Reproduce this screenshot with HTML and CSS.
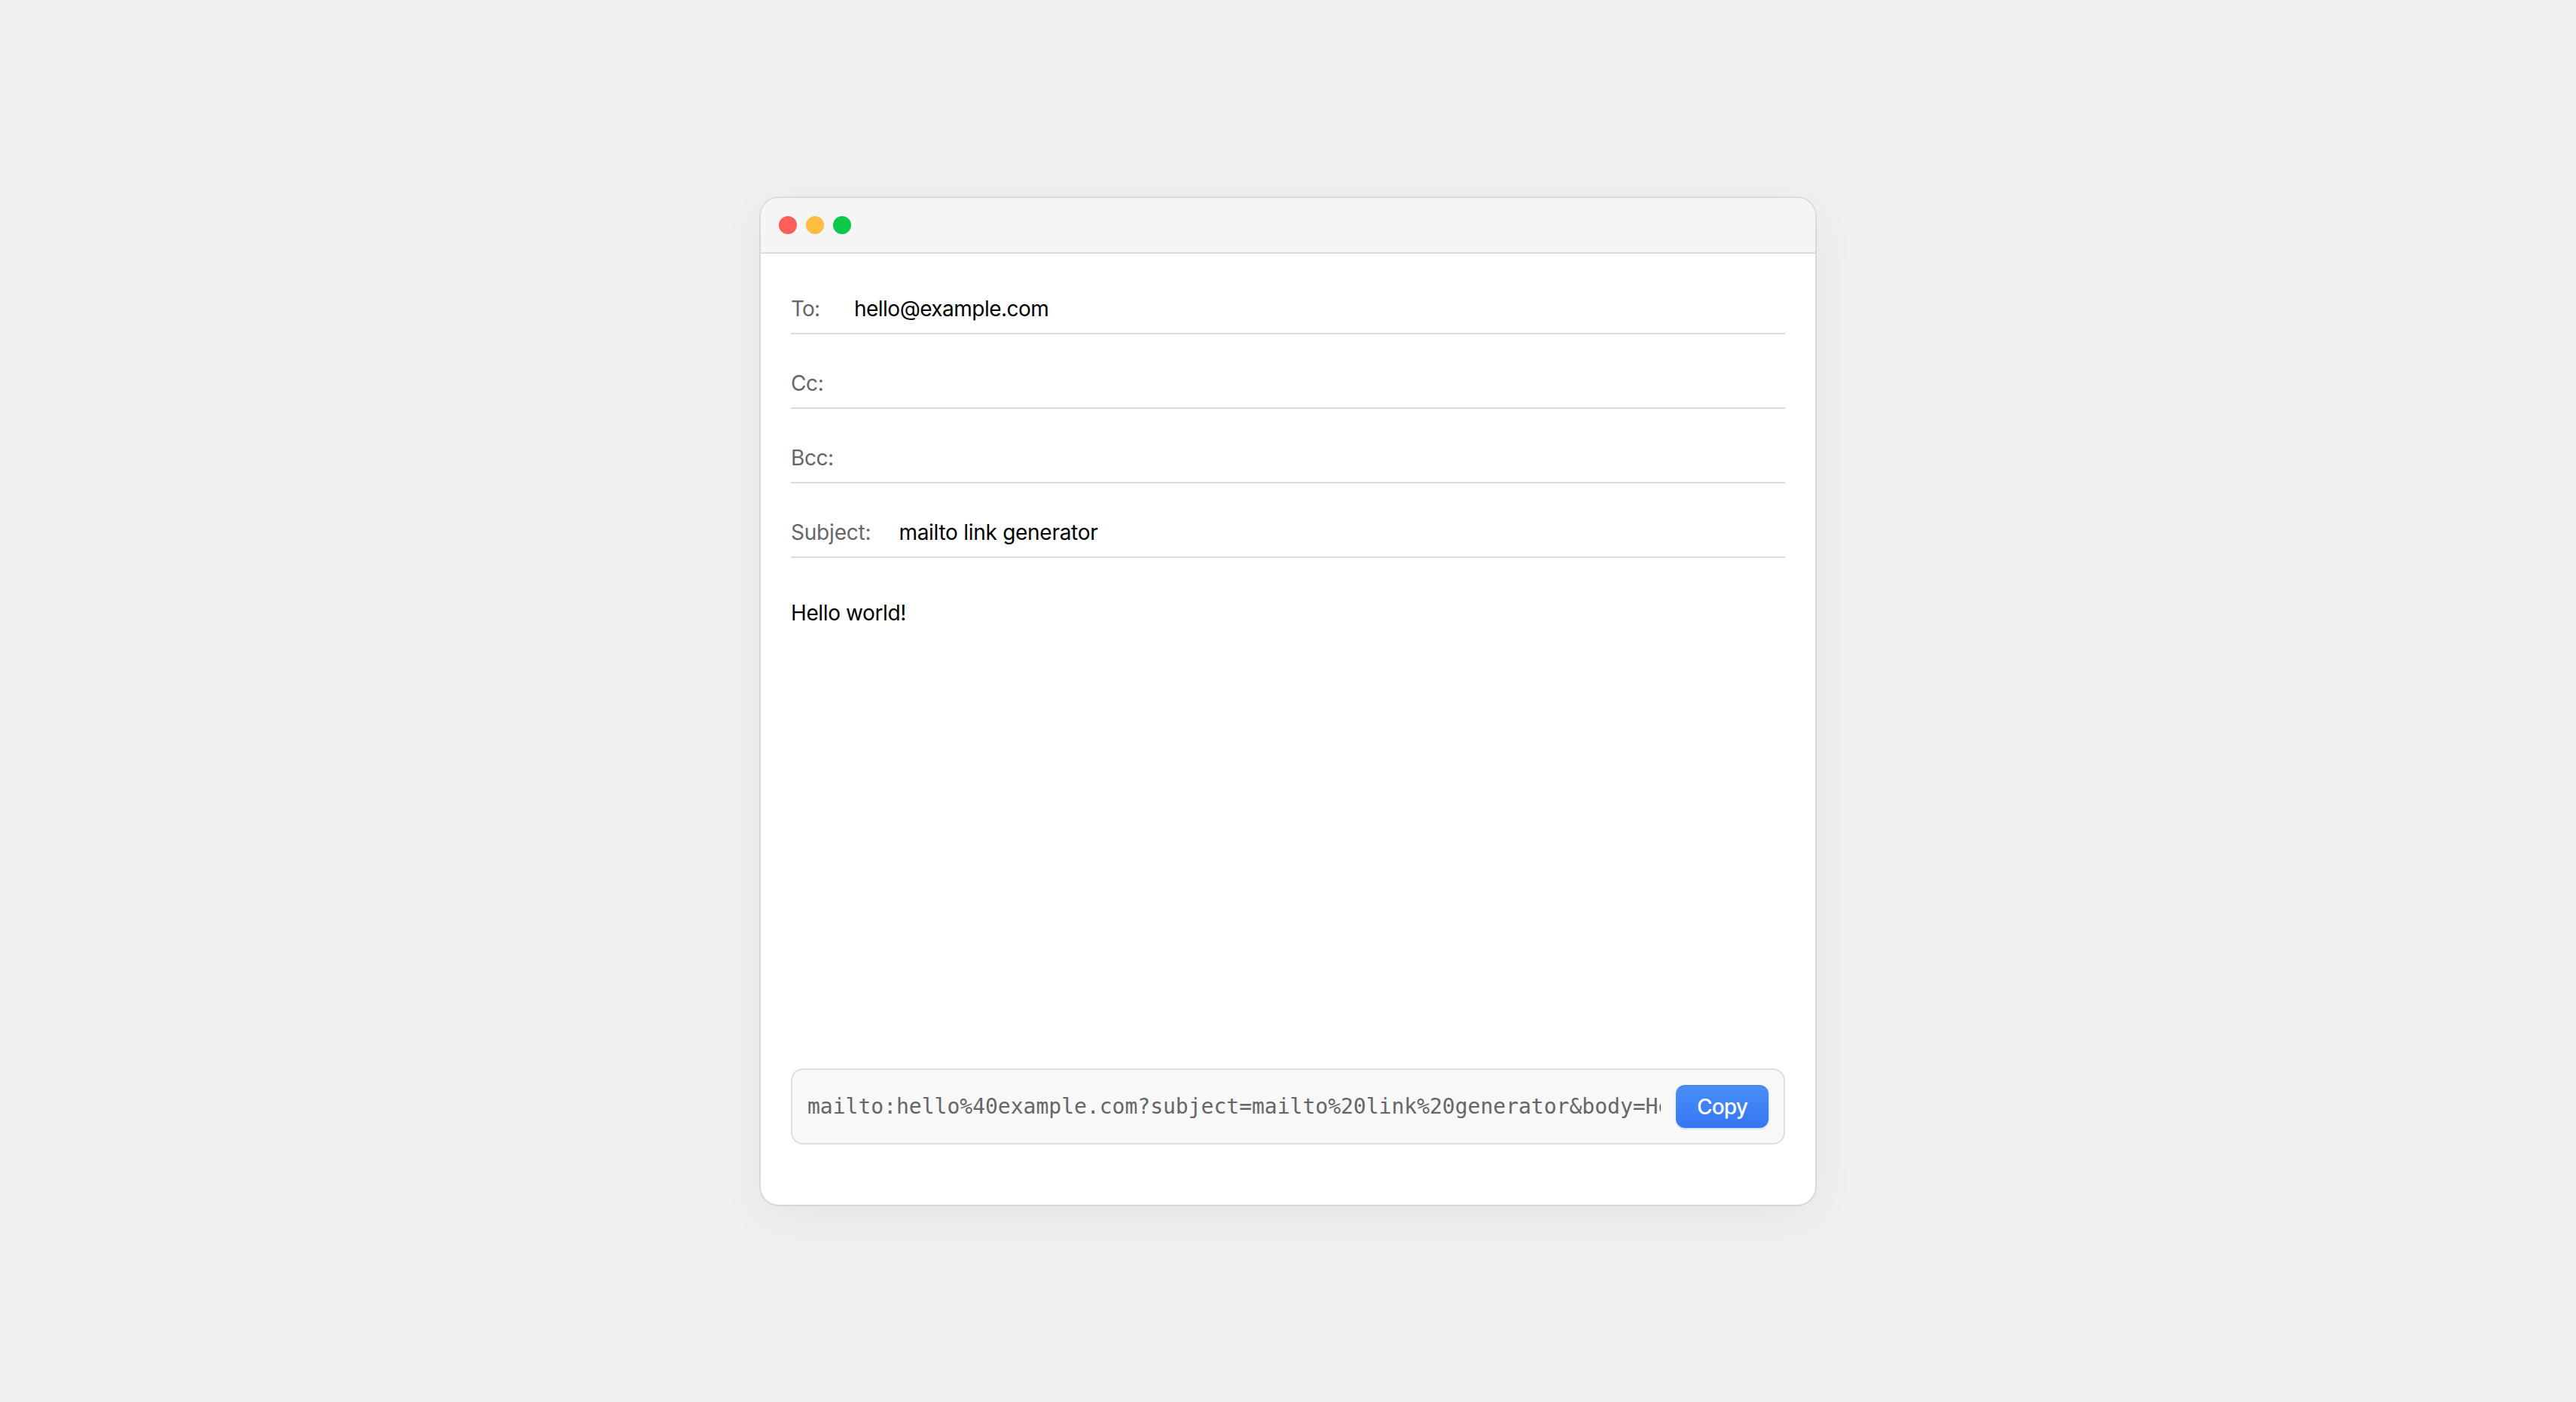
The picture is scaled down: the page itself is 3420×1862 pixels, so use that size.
FILE: index.html
```html
<!DOCTYPE html>
<html lang="en">
<head>
<meta charset="utf-8">
<title>mailto link generator</title>
<link rel="stylesheet" href="styles.css">
</head>
<body>
<main class="window">
  <header class="titlebar">
    <span class="dot dot-close"></span>
    <span class="dot dot-minimize"></span>
    <span class="dot dot-zoom"></span>
  </header>
  <div class="composer">
    <div class="fields">
      <div class="field"><span class="label label-to">To:</span><span class="value value-to">hello@example.com</span></div>
      <div class="field"><span class="label label-cc">Cc:</span></div>
      <div class="field"><span class="label label-cc">Bcc:</span></div>
      <div class="field"><span class="label">Subject:</span><span class="value">mailto link generator</span></div>
    </div>
    <div class="message">Hello world!</div>
    <div class="output">
      <code class="link">mailto:hello%40example.com?subject=mailto%20link%20generator&amp;body=Hello%20world!</code>
      <button class="copy" type="button">Copy</button>
    </div>
  </div>
</main>
</body>
</html>
```
FILE: styles.css
```css
* {
  box-sizing: border-box;
}

body {
  margin: 0;
  min-height: 100vh;
  padding-top: 263px;
  background: #f0f0f0;
  color: #000;
  font: 28px/34px Inter, "Liberation Sans", sans-serif;
}

.window {
  display: flex;
  flex-direction: column;
  width: 1400px;
  height: 1337px;
  margin: 0 auto;
  background: #fff;
  border-radius: 24px;
  box-shadow: 0 0 0 2px rgba(0, 0, 0, 0.08), 0 16px 64px rgba(0, 0, 0, 0.05);
}

.titlebar {
  display: flex;
  align-items: center;
  gap: 12px;
  height: 74px;
  padding: 0 24px;
  background: #f5f5f5;
  border-bottom: 2px solid #dcdcdc;
  border-radius: 24px 24px 0 0;
}

.dot {
  width: 24px;
  height: 24px;
  border-radius: 50%;
}

.dot-close { background: #fe5f58; }
.dot-minimize { background: #febc40; }
.dot-zoom { background: #0cc94a; }

.composer {
  display: flex;
  flex: 1;
  flex-direction: column;
  padding: 40px 40px 80px;
}

.fields {
  display: grid;
  gap: 32px;
}

.field {
  display: flex;
  gap: 37px;
  height: 67px;
  padding: 16px 0 15px;
  border-bottom: 2px solid #dcdcdc;
}

.label {
  min-width: 47px;
  color: #666;
  letter-spacing: -0.2px;
}

.label-to { letter-spacing: -0.8px; }
.label-cc { letter-spacing: -0.4px; }

.value { letter-spacing: -0.28px; }
.value-to { letter-spacing: -0.52px; }

.message {
  flex: 1;
  padding-top: 56px;
  letter-spacing: -0.38px;
}

.output {
  display: flex;
  align-items: center;
  gap: 20px;
  height: 101px;
  padding: 0 20px;
  background: #f8f8f8;
  border: 2px solid #dedede;
  border-radius: 16px;
}

.link {
  flex: 1;
  min-width: 0;
  overflow: hidden;
  color: #666;
  font: 28px/34px "DejaVu Sans Mono", monospace;
  white-space: nowrap;
}

.copy {
  width: 123px;
  height: 57px;
  padding: 0;
  color: #fff;
  font: 500 28px/34px Inter, "Liberation Sans", sans-serif;
  letter-spacing: -0.8px;
  background: linear-gradient(#4a8ff8, #3576f2);
  border: 0;
  border-radius: 12px;
  box-shadow: 0 1px 3px rgba(58, 130, 246, 0.35), inset 0 1px 0 rgba(0, 0, 0, 0.12);
}
```
